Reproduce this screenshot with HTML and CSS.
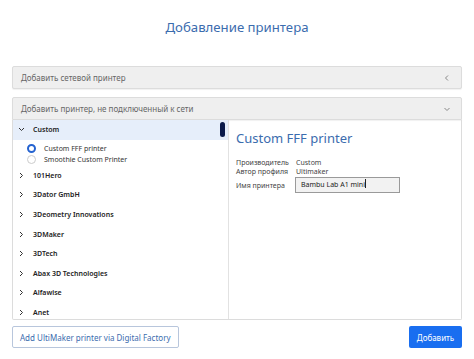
FILE: index.html
```html
<!DOCTYPE html>
<html lang="ru">
  <head>
    <meta charset="UTF-8" />
    <title>Добавление принтера</title>
    <link rel="stylesheet" href="styles.css">
  </head>
  <body>
    <h1 class="title">Добавление принтера</h1>

    <div class="panels">
      <div class="panel-head">
        <span>Добавить сетевой принтер</span>
        <svg class="chev" width="8" height="8" viewBox="0 0 8 8"><path d="M5 1.5 L2.5 4 L5 6.5" fill="none" stroke="#888" stroke-width="1"/></svg>
      </div>

      <div class="panel-head open">
        <span>Добавить принтер, не подключенный к сети</span>
        <svg class="chev" width="8" height="8" viewBox="0 0 8 8"><path d="M1.5 3 L4 5.5 L6.5 3" fill="none" stroke="#888" stroke-width="1"/></svg>
      </div>

      <div class="panel-body">
        <div class="list">
          <div class="scroll-thumb"></div>
          <div class="row group active">
            <svg class="arrow" width="7" height="7" viewBox="0 0 7 7"><path d="M1 2 L3.5 4.5 L6 2" fill="none" stroke="#333" stroke-width="1"/></svg>
            <span>Custom</span>
          </div>
          <div class="options">
            <div class="option">
              <span class="radio checked"></span>
              <span>Custom FFF printer</span>
            </div>
            <div class="option">
              <span class="radio"></span>
              <span>Smoothie Custom Printer</span>
            </div>
          </div>
          <div class="row group"><svg class="arrow" width="7" height="7" viewBox="0 0 7 7"><path d="M2 1 L4.5 3.5 L2 6" fill="none" stroke="#333" stroke-width="1"/></svg><span>101Hero</span></div>
          <div class="row group"><svg class="arrow" width="7" height="7" viewBox="0 0 7 7"><path d="M2 1 L4.5 3.5 L2 6" fill="none" stroke="#333" stroke-width="1"/></svg><span>3Dator GmbH</span></div>
          <div class="row group"><svg class="arrow" width="7" height="7" viewBox="0 0 7 7"><path d="M2 1 L4.5 3.5 L2 6" fill="none" stroke="#333" stroke-width="1"/></svg><span>3Deometry Innovations</span></div>
          <div class="row group"><svg class="arrow" width="7" height="7" viewBox="0 0 7 7"><path d="M2 1 L4.5 3.5 L2 6" fill="none" stroke="#333" stroke-width="1"/></svg><span>3DMaker</span></div>
          <div class="row group"><svg class="arrow" width="7" height="7" viewBox="0 0 7 7"><path d="M2 1 L4.5 3.5 L2 6" fill="none" stroke="#333" stroke-width="1"/></svg><span>3DTech</span></div>
          <div class="row group"><svg class="arrow" width="7" height="7" viewBox="0 0 7 7"><path d="M2 1 L4.5 3.5 L2 6" fill="none" stroke="#333" stroke-width="1"/></svg><span>Abax 3D Technologies</span></div>
          <div class="row group"><svg class="arrow" width="7" height="7" viewBox="0 0 7 7"><path d="M2 1 L4.5 3.5 L2 6" fill="none" stroke="#333" stroke-width="1"/></svg><span>Alfawise</span></div>
          <div class="row group"><svg class="arrow" width="7" height="7" viewBox="0 0 7 7"><path d="M2 1 L4.5 3.5 L2 6" fill="none" stroke="#333" stroke-width="1"/></svg><span>Anet</span></div>
        </div>

        <div class="details">
          <h2>Custom FFF printer</h2>
          <div class="info">
            <span class="label">Производитель</span><span>Custom</span>
            <span class="label">Автор профиля</span><span>Ultimaker</span>
          </div>
          <div class="name-row">
            <span class="label">Имя принтера</span>
            <div class="name-input">Bambu Lab A1 mini<span class="caret"></span></div>
          </div>
        </div>
      </div>

      <div class="actions">
        <button type="button" class="btn-secondary">Add UltiMaker printer via Digital Factory</button>
        <button type="button" class="btn-primary">Добавить</button>
      </div>
    </div>
  </body>
</html>
```

FILE: styles.css
```css
body {
  font-family: "Noto Sans", "Open Sans", sans-serif;
  margin: 0;
  background-color: #ffffff;
  color: #222;
}
.title {
  margin: 0;
  padding-top: 18px;
  height: 49px;
  box-sizing: border-box;
  text-align: center;
  font-size: 13.2px;
  line-height: 18px;
  font-weight: normal;
  color: #3b6cae;
}
.panels {
  padding: 0 12px;
}
.panel-head {
  display: flex;
  align-items: center;
  justify-content: space-between;
  height: 23px;
  box-sizing: border-box;
  padding: 0 8px;
  margin-top: 17px;
  background-color: #efefef;
  border: 1px solid #dcdcdc;
  border-radius: 2px;
  box-shadow: 0 1px 1px rgba(0, 0, 0, 0.06);
  font-size: 8px;
  color: #666;
}
.panel-head.open {
  margin-top: 8px;
  border-radius: 2px 2px 0 0;
}
.chev {
  margin-right: 2px;
}
.panel-body {
  display: grid;
  grid-template-columns: 216px 1fr;
  height: 200px;
  box-sizing: border-box;
  border: 1px solid #dcdcdc;
  border-top: none;
  border-radius: 0 0 2px 2px;
}
.list {
  position: relative;
  border-right: 1px solid #e2e2e2;
  overflow: hidden;
}
.scroll-thumb {
  position: absolute;
  right: 3px;
  top: 2px;
  width: 5px;
  height: 15px;
  border-radius: 3px;
  background-color: #0b1a4a;
}
.row {
  display: flex;
  align-items: center;
  height: 19.6px;
  font-size: 7px;
  font-weight: 600;
  color: #222;
}
.row.active {
  background-color: #e6eefa;
}
.arrow {
  margin-left: 5px;
  margin-right: 8px;
}
.options {
  padding-top: 3px;
}
.option {
  display: flex;
  align-items: center;
  height: 11.5px;
  font-size: 7px;
  color: #333;
}
.radio {
  width: 9px;
  height: 9px;
  box-sizing: border-box;
  border-radius: 50%;
  border: 1px solid #ccc;
  background: #fff;
  margin-left: 14px;
  margin-right: 8px;
}
.radio.checked {
  border: 2.5px solid #2563d0;
}
.details {
  padding: 9px 8px 0 7px;
}
.details h2 {
  margin: 0;
  font-size: 13px;
  line-height: 18px;
  font-weight: normal;
  color: #3b6cae;
}
.info {
  display: grid;
  grid-template-columns: 60px auto;
  margin-top: 11px;
  font-size: 7px;
  line-height: 9px;
  color: #444;
}
.name-row {
  display: flex;
  align-items: center;
  margin-top: 1px;
  font-size: 7px;
  color: #444;
}
.name-row .label {
  width: 59px;
}
.name-input {
  width: 105px;
  height: 16px;
  box-sizing: border-box;
  padding: 0 5px;
  line-height: 14px;
  background-color: #f2f2f2;
  border: 1px solid #9a9a9a;
  color: #222;
}
.caret {
  display: inline-block;
  width: 1px;
  height: 9px;
  background: #222;
  vertical-align: -1px;
}
.actions {
  display: flex;
  justify-content: space-between;
  margin-top: 6px;
}
.btn-secondary,
.btn-primary {
  height: 22px;
  font-family: inherit;
  font-size: 8px;
  border-radius: 2px;
  cursor: pointer;
}
.btn-secondary {
  padding: 0 7px;
  background-color: #fff;
  border: 1px solid #b8c6dc;
  color: #3b6cae;
}
.btn-primary {
  width: 53px;
  padding: 0;
  background-color: #196ef0;
  border: none;
  color: #fff;
}
```
